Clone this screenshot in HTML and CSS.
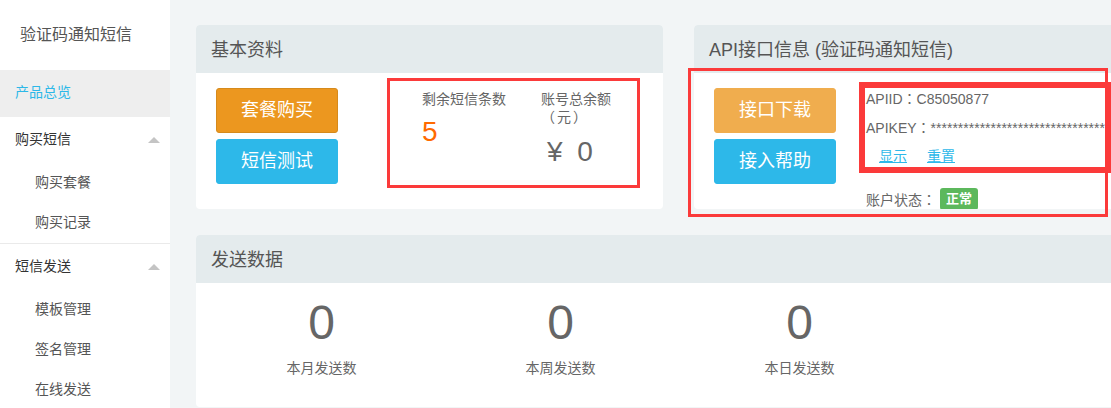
FILE: index.html
```html
<!DOCTYPE html>
<html lang="zh-CN">
<head>
<meta charset="utf-8">
<title>验证码通知短信 - 产品总览</title>
<link rel="stylesheet" href="styles.css">
</head>
<body>
<div class="layout">
  <aside class="sidebar">
    <div class="brand">验证码通知短信</div>
    <nav class="nav">
      <a class="nav-item active">产品总览</a>
      <div class="nav-group">
        <div class="nav-item group-title">购买短信<span class="caret-up"></span></div>
        <a class="nav-sub">购买套餐</a>
        <a class="nav-sub">购买记录</a>
      </div>
      <div class="nav-group">
        <div class="nav-item group-title">短信发送<span class="caret-up"></span></div>
        <a class="nav-sub">模板管理</a>
        <a class="nav-sub">签名管理</a>
        <a class="nav-sub">在线发送</a>
      </div>
    </nav>
  </aside>

  <main class="main">
    <div class="row">
      <section class="panel">
        <div class="panel-head">基本资料</div>
        <div class="panel-body">
          <div class="btn-stack">
            <a class="btn btn-orange-dark">套餐购买</a>
            <a class="btn btn-blue">短信测试</a>
          </div>
          <div class="stats">
            <div class="stat stat-count">
              <div class="stat-label">剩余短信条数</div>
              <div class="stat-value orange">5</div>
            </div>
            <div class="stat stat-money">
              <div class="stat-label">账号总余额<span class="paren">（元）</span></div>
              <div class="stat-value money">¥ 0</div>
            </div>
          </div>
        </div>
      </section>

      <section class="panel">
        <div class="panel-head">API接口信息 (验证码通知短信)</div>
        <div class="panel-body">
          <div class="btn-stack">
            <a class="btn btn-orange">接口下载</a>
            <a class="btn btn-blue">接入帮助</a>
          </div>
          <div class="api-info">
            <div class="api-line">APIID<span class="colon" lang="ja">：</span>C85050877</div>
            <div class="api-line nowrap">APIKEY<span class="colon" lang="ja">：</span>****************************************************</div>
            <div class="api-line api-links">
              <a class="link">显示</a>
              <a class="link">重置</a>
            </div>
            <div class="status-row">账户状态<span class="colon" lang="ja">：</span><span class="badge">正常</span></div>
          </div>
        </div>
      </section>
    </div>

    <section class="panel panel-wide">
      <div class="panel-head">发送数据</div>
      <div class="panel-body send-grid">
        <div class="send-item">
          <div class="send-num">0</div>
          <div class="send-label">本月发送数</div>
        </div>
        <div class="send-item">
          <div class="send-num">0</div>
          <div class="send-label">本周发送数</div>
        </div>
        <div class="send-item">
          <div class="send-num">0</div>
          <div class="send-label">本日发送数</div>
        </div>
        <div class="send-item"></div>
      </div>
    </section>

    <!-- highlight frames drawn over the panels -->
    <div class="mark mark-stats"></div>
    <div class="mark mark-api"></div>
    <div class="mark mark-key"></div>
  </main>
</div>
</body>
</html>
```

FILE: styles.css
```css
* {
  box-sizing: border-box;
}

html,
body {
  margin: 0;
  padding: 0;
  height: 100%;
  overflow: hidden;
}

body {
  font-family: "Liberation Sans", "Noto Sans CJK SC", sans-serif;
  font-size: 14px;
  color: #666;
  background: #f2f5f6;
  text-spacing-trim: space-all;
}

a {
  cursor: pointer;
  text-decoration: none;
}

.layout {
  display: flex;
  height: 408px;
}

/* ---------- sidebar ---------- */
.sidebar {
  flex: 0 0 170px;
  width: 170px;
  background: #fff;
}

.brand {
  height: 70px;
  padding-left: 20px;
  line-height: 70px;
  font-size: 16px;
  color: #555;
}

.nav {
  display: flex;
  flex-direction: column;
}

.nav-item {
  display: flex;
  align-items: center;
  justify-content: space-between;
  height: 46px;
  padding: 0 10px 5px 15px;
  font-size: 14px;
  color: #333;
}

.nav-item.active {
  height: 47px;
  background: #eee;
  color: #2cb8e8;
}

.nav-group + .nav-group {
  border-top: 1px solid #eaeaea;
}

.caret-up {
  width: 0;
  height: 0;
  margin-top: 4px;
  border-left: 6px solid transparent;
  border-right: 6px solid transparent;
  border-bottom: 6px solid #c4c4c4;
}

.nav-sub {
  display: flex;
  align-items: center;
  height: 40px;
  padding: 0 0 5px 35px;
  font-size: 14px;
  color: #555;
}

/* ---------- main ---------- */
.main {
  position: relative;
  flex: 1;
  padding: 25px 0 0 26px;
  overflow: hidden;
}

.row {
  display: grid;
  grid-template-columns: 467px 467px;
  column-gap: 31px;
  margin-bottom: 26px;
}

.panel {
  background: #fff;
  border-radius: 4px;
  overflow: hidden;
}

.panel-wide {
  width: 965px;
}

.panel-head {
  height: 48px;
  padding: 2px 0 0 15px;
  line-height: 46px;
  font-size: 18px;
  color: #555;
  background: #e4ebed;
}

.panel-body {
  display: flex;
  align-items: flex-start;
  height: 136px;
  padding: 15px 20px 0;
}

.btn-stack {
  display: flex;
  flex-direction: column;
  gap: 6px;
  flex: 0 0 122px;
}

.btn {
  display: block;
  height: 45px;
  line-height: 43px;
  border: 1px solid transparent;
  border-radius: 3px;
  font-size: 18px;
  color: #fff;
  text-align: center;
}

.btn-orange-dark {
  background: #ec971f;
  border-color: #d68a1c;
}

.btn-orange {
  background: #f0ad4e;
  border-color: #f0ad4e;
}

.btn-blue {
  background: #2db8e9;
  border-color: #2db8e9;
}

/* balance figures */
.stats {
  display: flex;
  margin-left: 84px;
  margin-top: 2px;
}

.stat-count {
  width: 119px;
}

.stat-money {
  width: 80px;
}

.stat-label {
  font-size: 14px;
  line-height: 18px;
  color: #666;
}

.paren {
  display: inline-block;
  letter-spacing: 2px;
}

.stat-value {
  margin-top: 4px;
  font-size: 28px;
  line-height: 40px;
}

.orange {
  color: #ff6a00;
}

.money {
  margin-top: 6px;
  padding-left: 6px;
  color: #666;
  white-space: nowrap;
  word-spacing: 7px;
}

/* api details */
.api-info {
  display: flex;
  flex-direction: column;
  margin-left: 30px;
  margin-top: -4px;
  font-size: 14px;
  color: #666;
}

.api-line {
  height: 29px;
  line-height: 29px;
}

.colon {
  font-family: "Noto Sans CJK JP", "Noto Sans CJK SC", sans-serif;
}

.nowrap {
  white-space: nowrap;
}

.api-links {
  display: flex;
  gap: 20px;
  padding-left: 13px;
}

.link {
  color: #2db8e9;
  text-decoration: underline;
}

.status-row {
  display: flex;
  align-items: center;
  margin-top: 17px;
  height: 22px;
}

.badge {
  display: inline-block;
  height: 22px;
  margin-left: 4px;
  padding: 0 6px;
  line-height: 22px;
  border-radius: 3px;
  background: #5cb85c;
  color: #fff;
  font-size: 13px;
  font-weight: bold;
}

/* send statistics */
.send-grid {
  display: grid;
  grid-template-columns: repeat(4, 239px);
  height: 124px;
  padding: 16px 6px 0;
}

.send-item {
  text-align: center;
}

.send-num {
  font-size: 48px;
  line-height: 48px;
  color: #666;
}

.send-label {
  margin-top: 11px;
  font-size: 14px;
  line-height: 20px;
  color: #666;
}

/* highlight frames */
.mark {
  position: absolute;
  border: 3px solid #fb3a3a;
  pointer-events: none;
}

.mark-stats {
  left: 217px;
  top: 78px;
  width: 253px;
  height: 110px;
}

.mark-api {
  left: 518px;
  top: 68px;
  width: 420px;
  height: 149px;
}

.mark-key {
  left: 689px;
  top: 82px;
  width: 252px;
  height: 91px;
  border-width: 6px;
}
```
